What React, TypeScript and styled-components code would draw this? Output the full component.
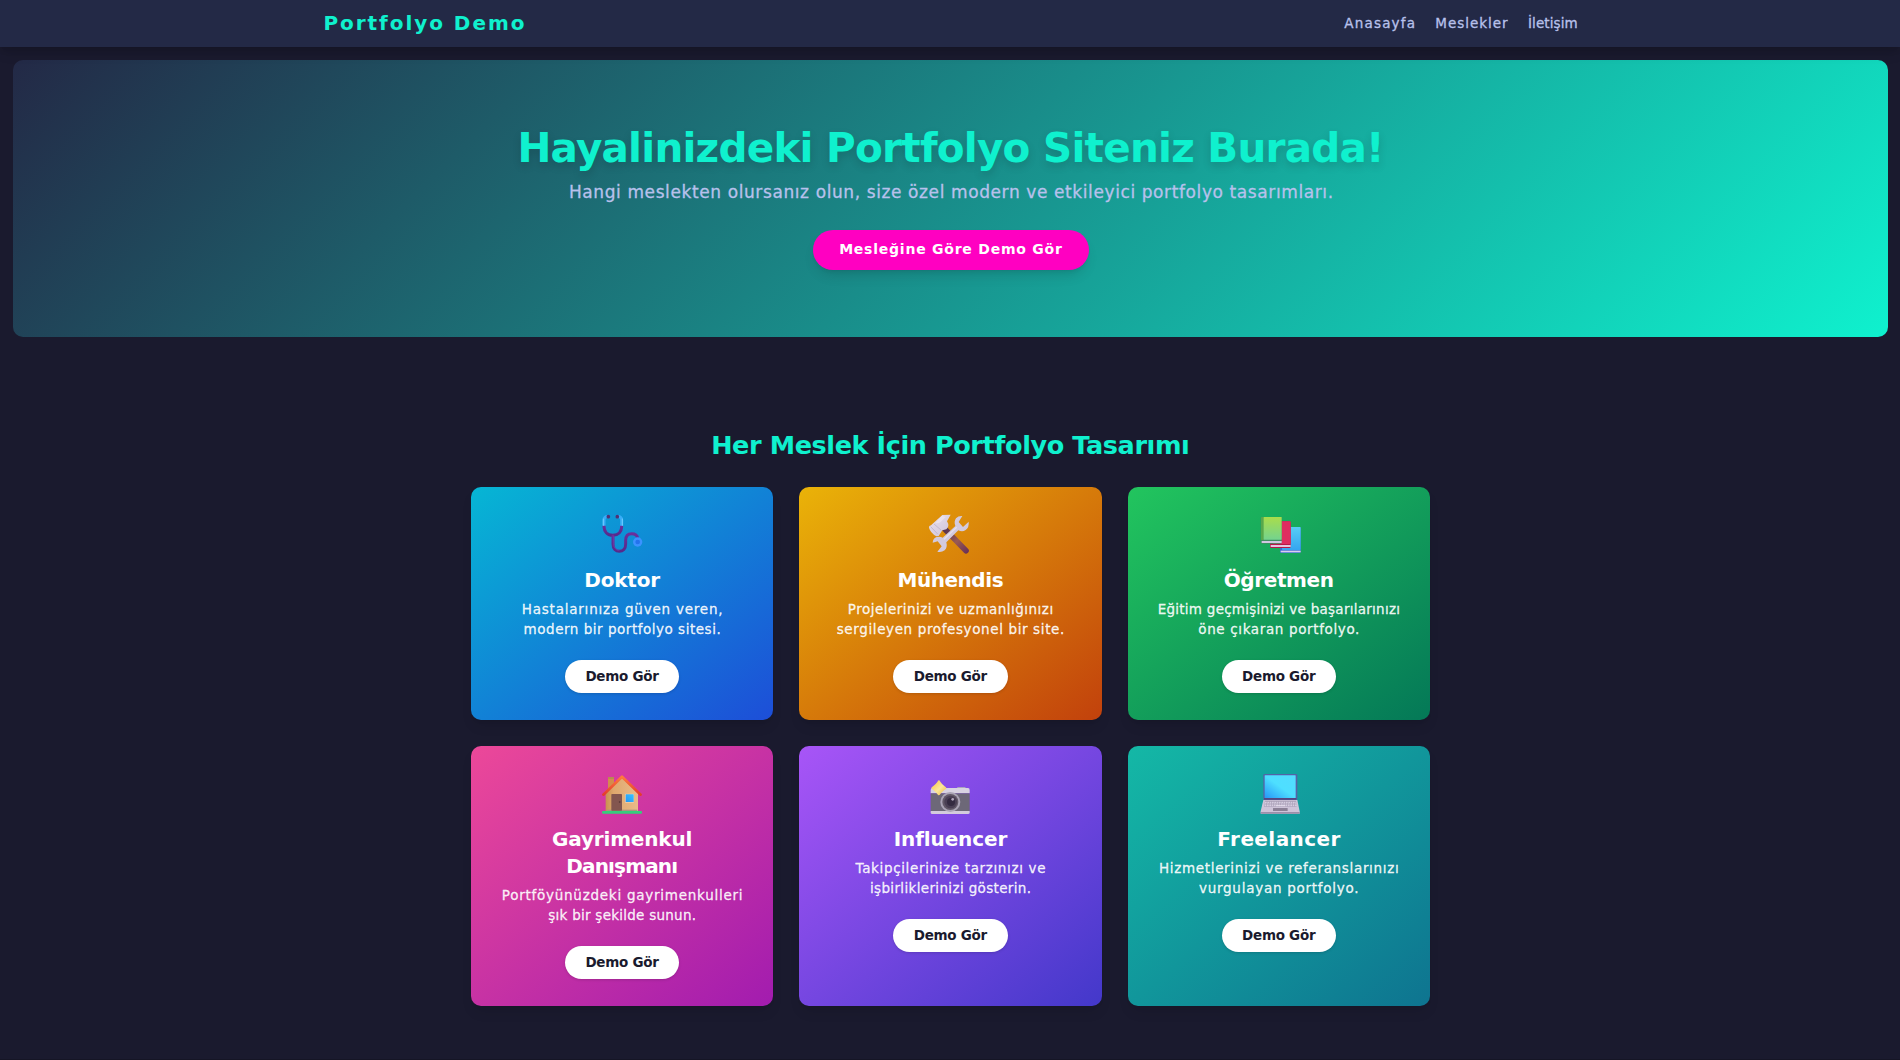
import React from 'react';
import styled, { createGlobalStyle } from 'styled-components';

const GlobalStyle = createGlobalStyle`
  *, *::before, *::after { box-sizing: border-box; }
  body {
    margin: 0;
    background: #1a1a2e;
    color: #fff;
    font-family: "DejaVu Sans", "Liberation Sans", sans-serif;
  }
  h1, h2, h3, p { margin: 0; }
  a { color: inherit; text-decoration: none; }
`;

const Page = styled.div`
  display: flex;
  flex-direction: column;
  height: 1060px;
  overflow: hidden;
`;

/* Tracked text: the trailing letter space is taken back so centring stays optical. */
const Tracked = styled.span<{ $ls: number }>`
  display: inline-block;
  white-space: nowrap;
  letter-spacing: ${(p) => p.$ls}px;
  margin-right: ${(p) => -p.$ls}px;
`;

const Header = styled.header`
  position: relative;
  height: 47px;
  flex: none;
  background: #232946;
  box-shadow: 0 4px 6px -1px rgba(0, 0, 0, 0.1), 0 8px 12px -2px rgba(0, 0, 0, 0.1);
`;

const HeaderInner = styled.div`
  display: flex;
  align-items: center;
  justify-content: space-between;
  height: 46px;
  max-width: 1280px;
  margin: 0 auto;
  padding: 0 12.3px 0 13.5px;
`;

const Logo = styled.a`
  font-size: 20px;
  font-weight: 700;
  line-height: 27px;
  color: #0ff1ce;
`;

const Nav = styled.nav`
  display: flex;
  gap: 20.3px;
  padding-bottom: 1px;
  font-size: 13.5px;
  line-height: 20px;
  color: #b8c1ec;
  -webkit-text-stroke: 0.3px currentColor;
`;

const Hero = styled.section`
  display: flex;
  flex-direction: column;
  align-items: center;
  flex: none;
  height: 277px;
  margin: 13px 12px 0 13px;
  padding: 66px 0 0 1px;
  border-radius: 10px;
  background: linear-gradient(135deg, #232946 0%, #0ff1ce 100%);
`;

const HeroTitle = styled.h1`
  font-size: 40.5px;
  font-weight: 700;
  line-height: 44px;
  color: #0ff1ce;
  text-shadow: 0 4px 8px rgba(0, 0, 0, 0.15);
`;

const HeroText = styled.p`
  margin-top: 10px;
  font-size: 17px;
  line-height: 24px;
  color: #b8c1ec;
  -webkit-text-stroke: 0.3px currentColor;
`;

const HeroButton = styled.a`
  height: 40px;
  margin-top: 26px;
  padding: 0 27px 0 26px;
  border-radius: 20px;
  background: #ff00c1;
  box-shadow: 0 8px 13px -3px rgba(0, 0, 0, 0.12), 0 3px 5px -3px rgba(0, 0, 0, 0.12);
  font-size: 14px;
  font-weight: 700;
  line-height: 38px;
  color: #fff;
`;

const Section = styled.section`
  flex: none;
  width: 960px;
  margin: 0 auto;
  padding: 90px 0 53px 1px;
`;

const SectionTitle = styled.h2`
  margin-bottom: 24px;
  font-size: 25.5px;
  font-weight: 700;
  line-height: 36px;
  text-align: center;
  color: #0ff1ce;
`;

const Grid = styled.div`
  display: grid;
  grid-template-columns: repeat(3, 1fr);
  grid-template-rows: 233px 260px;
  gap: 26px;
`;

const Card = styled.article<{ $from: string; $to: string }>`
  display: flex;
  flex-direction: column;
  align-items: center;
  padding: 27px 20px;
  border-radius: 10px;
  background: linear-gradient(to bottom right, ${(p) => p.$from}, ${(p) => p.$to});
  box-shadow: 0 8px 13px -3px rgba(0, 0, 0, 0.1), 0 3px 5px -3px rgba(0, 0, 0, 0.1);
  text-align: center;
`;

const Icon = styled.svg`
  display: block;
  flex: none;
  width: 50px;
  height: 46px;
  margin-bottom: 6.6px;
`;

const CardTitle = styled.h3`
  display: flex;
  flex-direction: column;
  align-items: center;
  font-size: 20px;
  font-weight: 700;
  line-height: 27px;
`;

const CardText = styled.p`
  display: flex;
  flex-direction: column;
  align-items: center;
  margin-top: 5.7px;
  font-size: 13.5px;
  line-height: 20px;
  color: rgba(255, 255, 255, 0.9);
  -webkit-text-stroke: 0.3px currentColor;
`;

const CardButton = styled.a`
  margin-top: 20.7px;
  padding: 0 20.5px;
  border-radius: 17px;
  background: #fff;
  box-shadow: 0 1px 3px rgba(0, 0, 0, 0.15);
  font-size: 13.5px;
  font-weight: 700;
  line-height: 33px;
  color: #1a1a2e;
`;

const Footer = styled.footer`
  flex: none;
  height: 1px;
  background: #151525;
`;

const Stethoscope = () => (
  <Icon viewBox="21 42 150 138" fill="none" strokeLinecap="round">
    <defs>
      <linearGradient id="tube" x1="0" y1="0" x2="0" y2="1">
        <stop offset="0" stopColor="#6a2f9c" />
        <stop offset="1" stopColor="#552a8c" />
      </linearGradient>
    </defs>
    <path d="M42 78C42 96 53 106 68.500 106S95 96 95 78" stroke="url(#tube)" strokeWidth="9" />
    <path d="M69 108V132C69 146 77 154 88 154S107 146 107 132V121C107 109 113 101 125 101C136 101 142 107 143 114" stroke="url(#tube)" strokeWidth="9" />
    <path d="M71 110V131C71 144 78 151 87 151" stroke="#8446b4" strokeWidth="1.500" />
    <path d="M54 50C46 49 42 53 42 60V77M82 50C91 49 95 53 95 60V77" stroke="#38adf8" strokeWidth="9" strokeLinecap="butt" />
    <path d="M40 57V76M97 57V76" stroke="#72cdff" strokeWidth="3" />
    <circle cx="55" cy="50" r="5.500" fill="#503173" />
    <circle cx="82" cy="50" r="5.500" fill="#503173" />
    <circle cx="143" cy="126" r="14" fill="#3b92ff" />
    <circle cx="143" cy="126" r="7" fill="#2472ed" />
  </Icon>
);

const Tools = () => (
  <Icon viewBox="16 42 150 138">
    <defs>
      <linearGradient id="handle" x1="80" y1="90" x2="145" y2="155" gradientUnits="userSpaceOnUse">
        <stop offset="0" stopColor="#5b3550" />
        <stop offset="0.500" stopColor="#9a5a50" />
        <stop offset="1" stopColor="#6b3258" />
      </linearGradient>
      <linearGradient id="steel" x1="40" y1="50" x2="130" y2="150" gradientUnits="userSpaceOnUse">
        <stop offset="0" stopColor="#e6dcea" />
        <stop offset="1" stopColor="#bdb2ca" />
      </linearGradient>
    </defs>
    <path d="M76 88L139 152" stroke="url(#handle)" strokeWidth="17" strokeLinecap="round" />
    <path d="M28 83Q27 77 34 76L68 45L93 44L82 64Q91 78 80 88L68 91L57 108L50 109Q32 98 28 83Z" fill="url(#steel)" />
    <path d="M33 80L54 102M43 72L65 91" stroke="#b5abc2" strokeWidth="2" />
    <path d="M67 47L47 69Q57 72 64 65L78 51Z" fill="#fbf3f8" opacity="0.400" />
    <path d="M128 48L117 66L130 81L147 65Q149 82 138 90Q128 97 116 91L80 127Q84 142 75 151Q65 158 53 155L66 139L54 124L39 128Q40 114 51 111Q61 108 69 113L107 78Q102 65 109 55Q116 47 128 48Z" fill="#d3cadd" />
    <path d="M111 82L73 118" stroke="#e6dfec" strokeWidth="4" />
  </Icon>
);

const Books = () => (
  <Icon viewBox="10 42 150 138">
    <defs>
      <linearGradient id="lime" x1="0" y1="0" x2="0" y2="1">
        <stop offset="0" stopColor="#a9dd4b" />
        <stop offset="1" stopColor="#74d38e" />
      </linearGradient>
      <linearGradient id="sky" x1="0" y1="0" x2="0" y2="1">
        <stop offset="0" stopColor="#57cef5" />
        <stop offset="1" stopColor="#35a5f0" />
      </linearGradient>
    </defs>
    <rect x="88" y="81" width="62" height="78" rx="4" fill="#386bd0" />
    <rect x="94" y="81" width="56" height="69" rx="2" fill="url(#sky)" />
    <rect x="90" y="152" width="60" height="5" fill="#dbceef" />
    <rect x="58" y="64" width="62" height="80" rx="4" fill="#b71847" />
    <rect x="66" y="64" width="54" height="68" rx="2" fill="#df2d60" />
    <rect x="60" y="135" width="60" height="6" fill="#e4c4df" />
    <rect x="30" y="51" width="63" height="80" rx="4" fill="#408f61" />
    <rect x="31" y="51" width="9" height="69" rx="2" fill="#58a84c" />
    <rect x="39" y="51" width="54" height="68" rx="1" fill="url(#lime)" />
    <rect x="33" y="123" width="60" height="6" fill="#cfc7e1" />
  </Icon>
);

const House = () => (
  <Icon viewBox="21 39 150 138">
    <defs>
      <linearGradient id="wall" x1="0" y1="0" x2="1" y2="0">
        <stop offset="0" stopColor="#c8914f" />
        <stop offset="0.250" stopColor="#dfa86e" />
        <stop offset="1" stopColor="#eabb88" />
      </linearGradient>
      <linearGradient id="roof" x1="0" y1="0" x2="0" y2="1">
        <stop offset="0" stopColor="#ff7b3c" />
        <stop offset="1" stopColor="#e33c2d" />
      </linearGradient>
      <linearGradient id="pane" x1="0" y1="1" x2="1" y2="0">
        <stop offset="0" stopColor="#2495f4" />
        <stop offset="1" stopColor="#38c2ff" />
      </linearGradient>
    </defs>
    <rect x="54" y="51" width="18" height="48" rx="2" fill="#d48b4d" />
    <rect x="54" y="51" width="18" height="6" rx="2" fill="#b88a50" />
    <path d="M47 100L96 53L144 100V154H47Z" fill="url(#wall)" />
    <rect x="50" y="149" width="92" height="5" fill="#a8957f" />
    <rect x="64" y="102" width="32" height="50" rx="2" fill="#83564f" />
    <circle cx="89" cy="126" r="2.500" fill="#50322f" />
    <rect x="105" y="101" width="27" height="27" rx="2" fill="#f3cfa9" />
    <rect x="107" y="103" width="24" height="23" rx="1" fill="url(#pane)" />
    <path d="M40 104L96 50L152 104" fill="none" stroke="url(#roof)" strokeWidth="8" strokeLinecap="round" strokeLinejoin="round" />
    <rect x="36" y="153" width="120" height="8" rx="3" fill="#35cd7c" />
  </Icon>
);

const Camera = () => (
  <Icon viewBox="16 39 150 138">
    <defs>
      <linearGradient id="flash" x1="0" y1="0" x2="1" y2="1">
        <stop offset="0" stopColor="#f9c23e" />
        <stop offset="0.550" stopColor="#fbe79a" />
        <stop offset="1" stopColor="#eeb838" />
      </linearGradient>
    </defs>
    <rect x="112" y="81" width="26" height="8" rx="3" fill="#aaa6bc" />
    <path d="M38 84H145Q150 84 150 90V100H33V90Q33 84 38 84Z" fill="#d8d3e2" />
    <rect x="33" y="100" width="117" height="56" fill="#6d6878" />
    <path d="M33 153H150V158Q150 162 145 162H38Q33 162 33 158Z" fill="#d3cbdc" />
    <circle cx="92" cy="126" r="30" fill="#aaa4b5" />
    <circle cx="92" cy="126" r="24" fill="#615867" />
    <circle cx="93" cy="126" r="19" fill="#4a4054" />
    <circle cx="94" cy="126" r="12" fill="#342b40" />
    <circle cx="99" cy="118" r="4" fill="#b1a7bc" />
    <path d="M57 61Q60 61 62 65Q67 73 75 79Q80 82 80 84Q80 87 75 89Q67 95 62 102Q60 106 57 106Q55 106 53 102Q47 94 40 89Q35 86 35 84Q35 82 40 79Q47 74 53 66Q55 61 57 61Z" fill="url(#flash)" />
  </Icon>
);

const Laptop = () => (
  <Icon viewBox="10 39 150 138">
    <defs>
      <linearGradient id="screen" x1="0" y1="1" x2="1" y2="0">
        <stop offset="0" stopColor="#2797f8" />
        <stop offset="0.500" stopColor="#4edfff" />
        <stop offset="1" stopColor="#53dcff" />
      </linearGradient>
    </defs>
    <rect x="38" y="42" width="102" height="79" rx="4" fill="#5463a7" />
    <rect x="42" y="46" width="93" height="68" rx="1" fill="url(#screen)" />
    <rect x="40" y="114" width="97" height="5" fill="#564780" />
    <path d="M38 120H140L147 154V161H30V154Z" fill="#cec4d9" />
    <path d="M30 156H147V158Q147 161 144 161H33Q30 161 30 158Z" fill="#9c8fab" />
    <path d="M43 122H136L138 140H40Z" fill="#aaa0b8" />
    <path d="M43 127H136M42 132H137M42 137H138" stroke="#ded6e8" strokeWidth="3" strokeDasharray="5 2" />
    <path d="M76 137H104" stroke="#e4ddec" strokeWidth="3" />
    <rect x="67" y="144" width="44" height="9" rx="1" fill="#8b8096" />
  </Icon>
);

type Line = [text: string, spacing: number];

interface Profession {
  icon: React.ComponentType;
  from: string;
  to: string;
  title: Line[];
  text: Line[];
}

const professions: Profession[] = [
  {
    icon: Stethoscope, from: '#06b6d4', to: '#1d4ed8',
    title: [['Doktor', -0.19]],
    text: [['Hastalarınıza güven veren,', 0.78], ['modern bir portfolyo sitesi.', 0.52]],
  },
  {
    icon: Tools, from: '#eab308', to: '#c2410c',
    title: [['Mühendis', -0.45]],
    text: [['Projelerinizi ve uzmanlığınızı', 0.48], ['sergileyen profesyonel bir site.', 0.62]],
  },
  {
    icon: Books, from: '#22c55e', to: '#047857',
    title: [['Öğretmen', -0.4]],
    text: [['Eğitim geçmişinizi ve başarılarınızı', 0.26], ['öne çıkaran portfolyo.', 0.63]],
  },
  {
    icon: House, from: '#ec4899', to: '#a21caf',
    title: [['Gayrimenkul', -0.18], ['Danışmanı', -0.85]],
    text: [['Portföyünüzdeki gayrimenkulleri', 0.74], ['şık bir şekilde sunun.', 0.25]],
  },
  {
    icon: Camera, from: '#a855f7', to: '#4338ca',
    title: [['Influencer', -0.1]],
    text: [['Takipçilerinize tarzınızı ve', 0.64], ['işbirliklerinizi gösterin.', 0.35]],
  },
  {
    icon: Laptop, from: '#14b8a6', to: '#0e7490',
    title: [['Freelancer', 0.42]],
    text: [['Hizmetlerinizi ve referanslarınızı', 0.67], ['vurgulayan portfolyo.', 0.74]],
  },
];

const Lines = ({ lines }: { lines: Line[] }) => (
  <>
    {lines.map(([text, spacing]) => (
      <Tracked key={text} $ls={spacing}>{text}</Tracked>
    ))}
  </>
);

export default function App() {
  return (
    <Page>
      <GlobalStyle />
      <Header>
        <HeaderInner>
          <Logo href="#"><Tracked $ls={1.95}>Portfolyo Demo</Tracked></Logo>
          <Nav>
            <a href="#"><Tracked $ls={1.2}>Anasayfa</Tracked></a>
            <a href="#meslekler"><Tracked $ls={0.98}>Meslekler</Tracked></a>
            <a href="#iletisim"><Tracked $ls={0.1}>İletişim</Tracked></a>
          </Nav>
        </HeaderInner>
      </Header>
      <Hero>
        <HeroTitle><Tracked $ls={-0.75}>Hayalinizdeki Portfolyo Siteniz Burada!</Tracked></HeroTitle>
        <HeroText>
          <Tracked $ls={0.6}>Hangi meslekten olursanız olun, size özel modern ve etkileyici portfolyo tasarımları.</Tracked>
        </HeroText>
        <HeroButton href="#meslekler"><Tracked $ls={0.77}>Mesleğine Göre Demo Gör</Tracked></HeroButton>
      </Hero>
      <Section id="meslekler">
        <SectionTitle><Tracked $ls={-0.4}>Her Meslek İçin Portfolyo Tasarımı</Tracked></SectionTitle>
        <Grid>
          {professions.map(({ icon: Glyph, from, to, title, text }) => (
            <Card key={title[0][0]} $from={from} $to={to}>
              <Glyph />
              <CardTitle><Lines lines={title} /></CardTitle>
              <CardText><Lines lines={text} /></CardText>
              <CardButton href="#"><Tracked $ls={-0.28}>Demo Gör</Tracked></CardButton>
            </Card>
          ))}
        </Grid>
      </Section>
      <Footer />
    </Page>
  );
}
